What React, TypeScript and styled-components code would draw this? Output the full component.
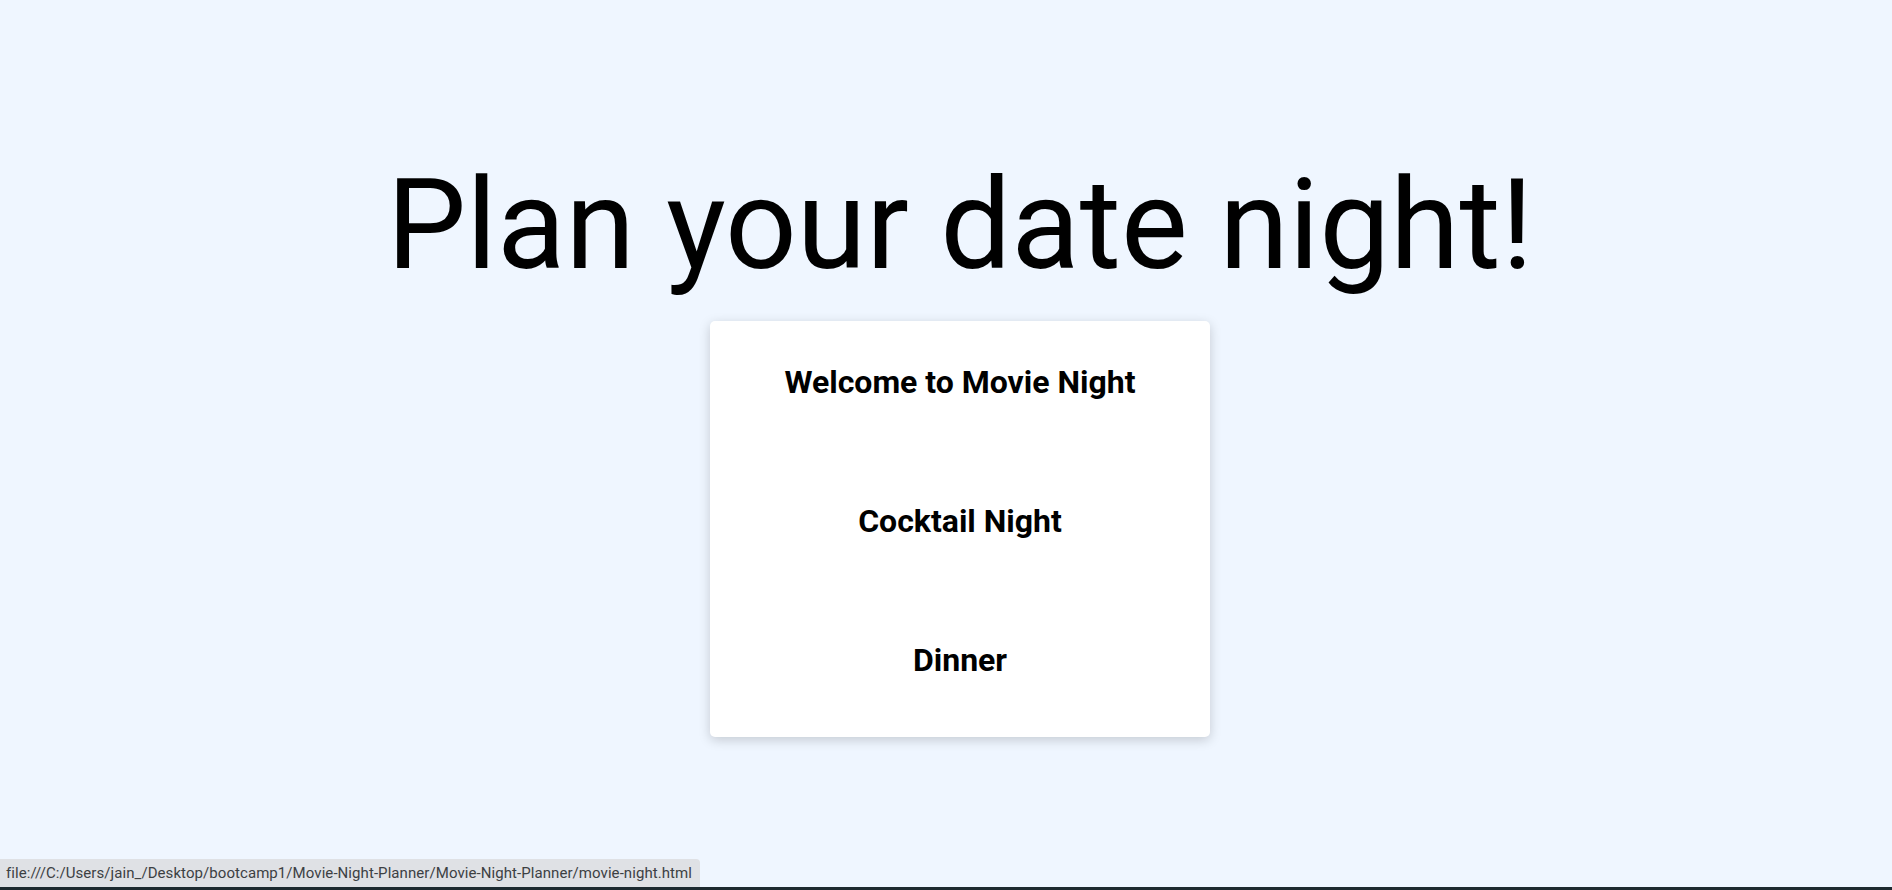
import React from "react";
import styled, { createGlobalStyle } from "styled-components";

const GlobalStyle = createGlobalStyle`
  html, body {
    margin: 0;
    padding: 0;
  }
  body {
    background: #eff6ff;
    font-family: Roboto, "Open Sans", sans-serif;
    color: #000;
  }
`;

const Page = styled.main`
  min-height: 890px;
  display: flex;
  flex-direction: column;
  align-items: center;
  padding-top: 162px;
  padding-left: 28px;
  box-sizing: border-box;
`;

const Title = styled.h1`
  margin: 0;
  font-size: 126px;
  line-height: 126px;
  font-weight: 400;
  white-space: nowrap;
`;

const Card = styled.section`
  margin-top: 33px;
  width: 500px;
  height: 416px;
  box-sizing: border-box;
  background: #ffffff;
  border-radius: 5px;
  box-shadow: 0 3px 12px rgba(0, 0, 0, 0.18);
  display: flex;
  flex-direction: column;
  align-items: center;
  padding-top: 40px;
  gap: 97px;
`;

const Option = styled.h2`
  margin: 0;
  font-size: 32px;
  line-height: 42px;
  font-weight: 700;
`;

const StatusBubble = styled.div`
  position: fixed;
  left: 0;
  bottom: 3px;
  height: 28px;
  width: 700px;
  box-sizing: border-box;
  padding: 0 6px;
  display: flex;
  align-items: center;
  background: #dfe1e5;
  border-top-right-radius: 4px;
  font-family: Roboto, sans-serif;
  font-size: 15px;
  letter-spacing: 0.07px;
  color: #3c4043;
  white-space: nowrap;
`;

const BottomEdge = styled.div`
  position: fixed;
  left: 0;
  right: 0;
  bottom: 0;
  height: 3px;
  background: #1d2a30;
`;

export default function App() {
  return (
    <>
      <GlobalStyle />
      <Page>
        <Title>Plan your date night!</Title>
        <Card>
          <Option>Welcome to Movie Night</Option>
          <Option>Cocktail Night</Option>
          <Option>Dinner</Option>
        </Card>
      </Page>
      <StatusBubble>
        file:///C:/Users/jain_/Desktop/bootcamp1/Movie-Night-Planner/Movie-Night-Planner/movie-night.html
      </StatusBubble>
      <BottomEdge />
    </>
  );
}
